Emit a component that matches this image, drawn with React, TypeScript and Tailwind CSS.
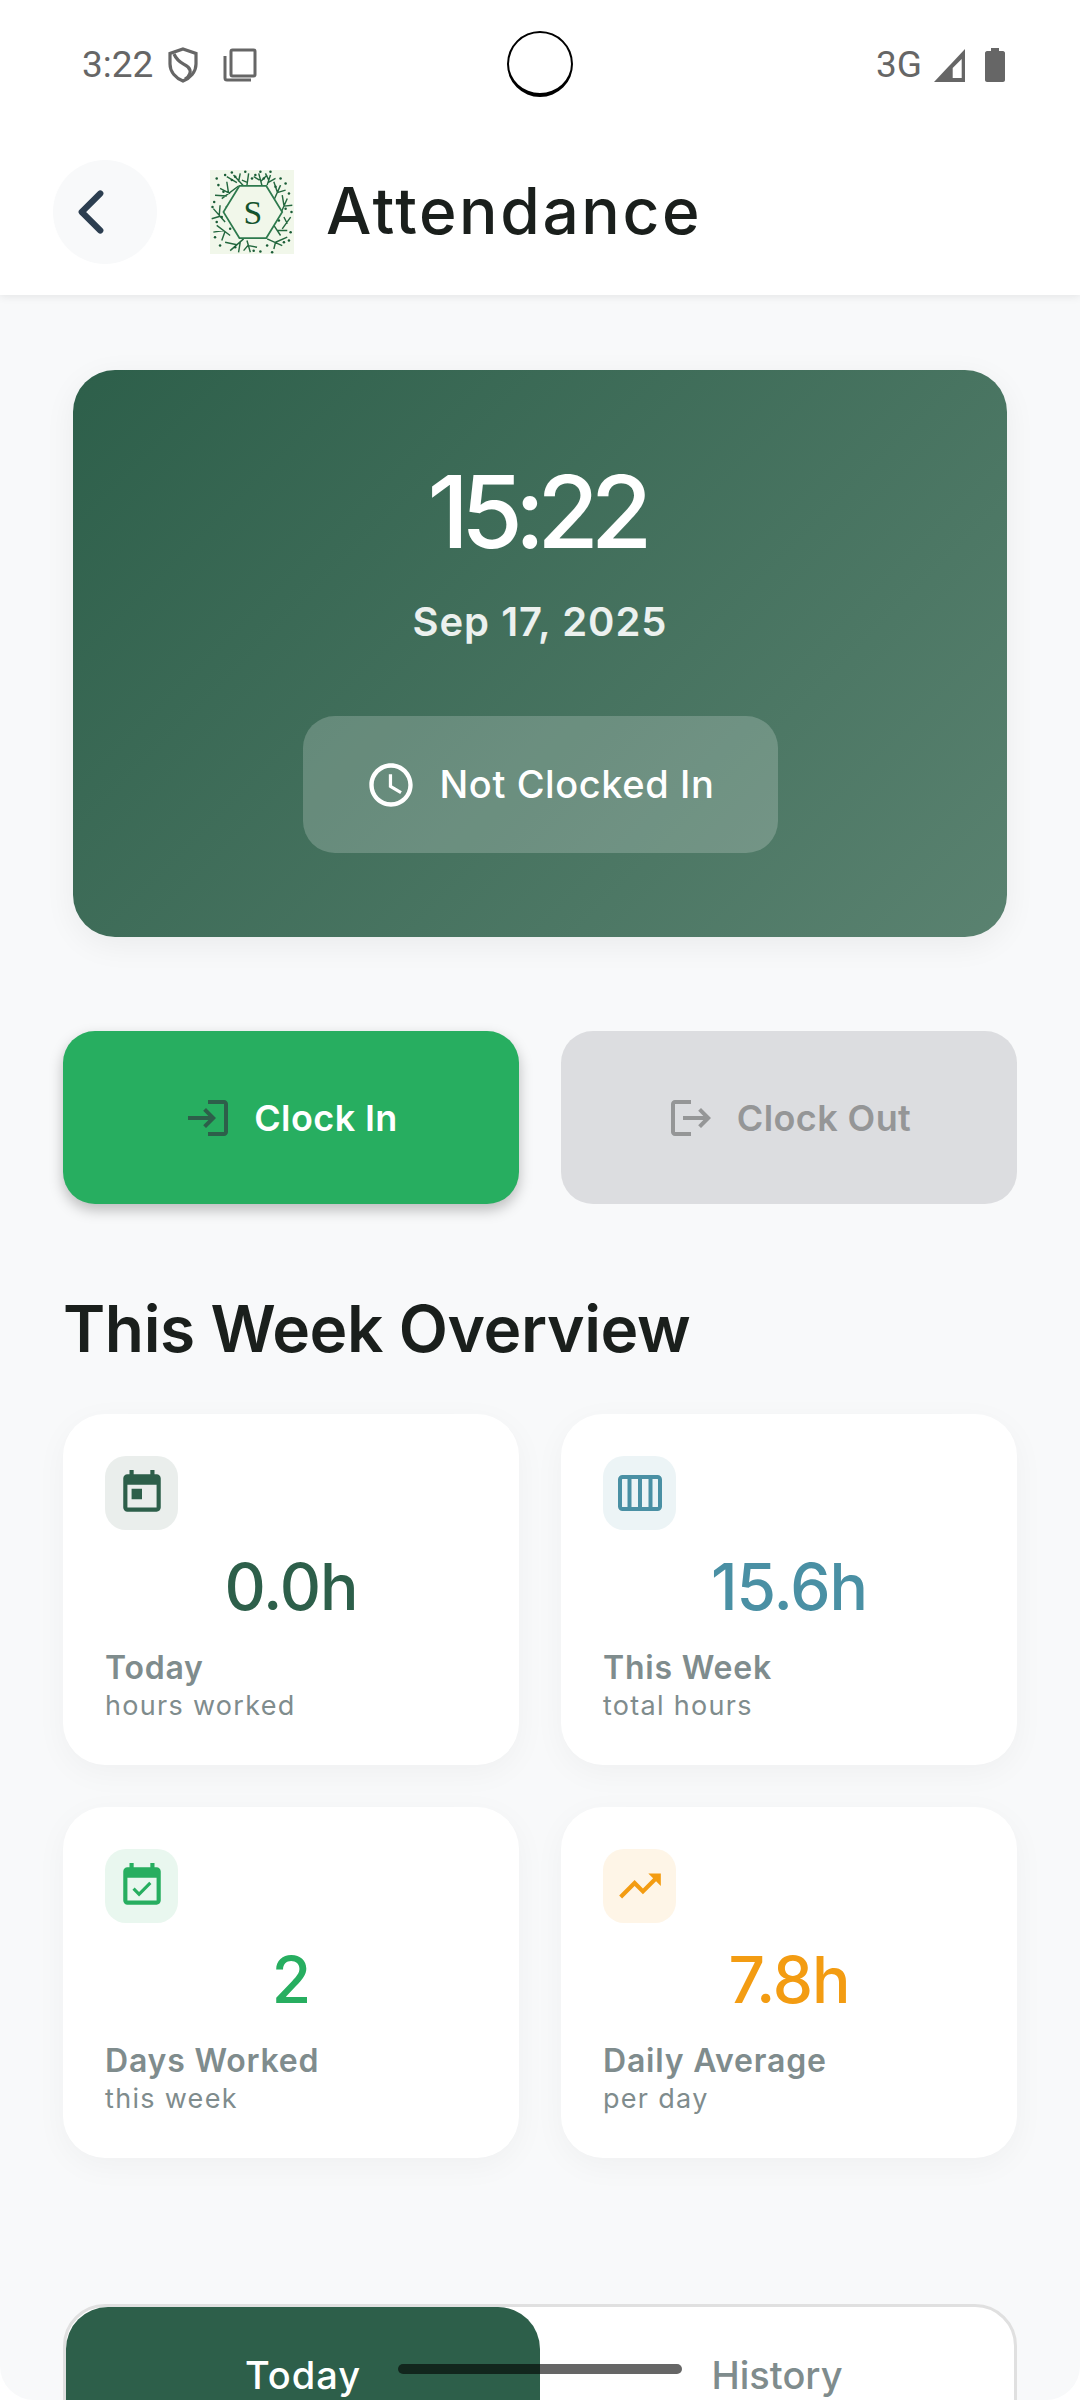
import { IoChevronBack } from "react-icons/io5";
import {
  MdEventAvailable,
  MdLogin,
  MdLogout,
  MdOutlineAccessTime,
  MdToday,
  MdTrendingUp,
} from "react-icons/md";
import type { ReactNode } from "react";

const sprigs = [
  "M14 34 L34 19 M12 22 L24 28 M20 14 L22 27 M6 30 L20 31",
  "M28 6 L40 19 M20 8 L32 15 M36 4 L34 14",
  "M46 4 L44 18 M38 12 L45 15",
  "M58 4 L62 19 M52 8 L59 12 M68 6 L61 13",
  "M72 6 L68 18 M78 10 L69 15 M66 4 L70 12",
  "M84 18 L76 36 M90 24 L80 27 M76 14 L80 26",
  "M92 34 L84 52 M98 42 L88 43 M86 30 L88 42",
  "M96 56 L86 70 M92 64 L88 56",
  "M4 46 L18 62 M2 58 L12 55 M12 42 L11 54",
  "M8 66 L24 78 M4 74 L16 72 M14 84 L18 73",
  "M24 96 L40 82 M18 86 L32 89 M34 98 L36 86",
  "M48 98 L44 84 M56 92 L46 90 M40 96 L45 90",
  "M86 90 L68 82 M92 80 L78 86 M76 94 L78 86",
  "M84 78 L76 66 M92 72 L80 72",
];

const dots = [
  [8, 10], [18, 6], [26, 3], [42, 2], [50, 10], [60, 2], [72, 2], [84, 10], [90, 16],
  [94, 28], [5, 38], [3, 44], [10, 18], [6, 80], [12, 90], [30, 92], [52, 96], [60, 97],
  [74, 98], [88, 86], [96, 74], [97, 50], [26, 12], [64, 10], [82, 60], [14, 56], [16, 26],
  [30, 8], [54, 6], [78, 20], [90, 46], [24, 70], [68, 90], [94, 84], [20, 44], [8, 62],
];

const Logo = () => (
  <svg viewBox="0 0 100 100" className="h-[84px] w-[84px]">
    <rect width="100" height="100" fill="#f1f7ea" />
    <path d={sprigs.join(" ")} stroke="#24683f" strokeWidth="1.7" fill="none" />
    {dots.map(([cx, cy]) => (
      <circle key={`${cx}-${cy}`} cx={cx} cy={cy} r="1.5" fill="#1a5c36" />
    ))}
    <path d="M35 19 H67 L86 50 L67 81 H35 L16 50 Z" stroke="#2d7a4d" strokeWidth="2" fill="#f1f7ea" />
    <text x="51" y="64" textAnchor="middle" fontSize="40" fill="#14532d" fontFamily="'Liberation Serif', serif">
      S
    </text>
  </svg>
);

const ShieldIcon = () => (
  <svg viewBox="0 0 30 36" className="h-[36px] w-[30px]" fill="none" stroke="#666666" strokeWidth="3.2">
    <path d="M15 2 L28 6.5 V17 C28 25 22 31 15 34 C8 31 2 25 2 17 V6.5 Z" />
    <path d="M6 7 C10 16 15 16 20 20 C24 24 22 29 17 32" />
  </svg>
);

const CopyIcon = () => (
  <svg viewBox="0 0 34 34" className="h-[34px] w-[34px]" fill="none" stroke="#666666" strokeWidth="3">
    <rect x="8" y="2" width="24" height="26" rx="1.5" />
    <path d="M2 8 V30 C2 31.5 3 32 4 32 H28" />
  </svg>
);

const SignalIcon = () => (
  <svg viewBox="0 0 31 33" className="h-[33px] w-[31px]">
    <path d="M31 0 V33 H0 Z" fill="#666666" />
    <path d="M18.7 19 L27.7 10 V29 H18.7 Z" fill="#ffffff" />
  </svg>
);

const BatteryIcon = () => (
  <svg viewBox="0 0 20 34" className="h-[34px] w-[20px]">
    <path d="M6 0 H14 V3 H18 C19 3 20 4 20 5 V32 C20 33 19 34 18 34 H2 C1 34 0 33 0 32 V5 C0 4 1 3 2 3 H6 Z" fill="#666666" />
  </svg>
);

const WeekIcon = () => (
  <svg viewBox="0 0 44 36" className="h-[36px] w-[44px]" fill="none" stroke="#4a90a4" strokeWidth="4">
    <rect x="2" y="2" width="40" height="32" rx="2.5" />
    <path d="M11.5 2 V34 M22 2 V34 M32.5 2 V34" />
  </svg>
);

type StatProps = {
  icon: ReactNode;
  iconBg: string;
  value: string;
  valueColor: string;
  label: string;
  sub: string;
};

const StatCard = ({ icon, iconBg, value, valueColor, label, sub }: StatProps) => (
  <div className="h-[351px] rounded-[42px] bg-white p-[42px] shadow-[0_8px_32px_rgba(0,0,0,0.04)]">
    <div className={`flex h-[74px] w-[73px] items-center justify-center rounded-[21px] ${iconBg}`}>{icon}</div>
    <div className={`mt-[13px] text-center text-[64px] leading-[88px] font-medium tracking-[-1px] ${valueColor}`}>
      {value}
    </div>
    <div className="mt-[16px] text-[32px] leading-[42px] font-semibold tracking-[0.8px] text-[#7f8c8d]">{label}</div>
    <div className="-mt-[1px] text-[27px] leading-[36px] tracking-[1.3px] text-[#7f8c8d]">{sub}</div>
  </div>
);

export default function App() {
  return (
    <div className="relative h-[2400px] w-[1080px] overflow-hidden rounded-b-[34px] bg-[#f8f9fa] font-['Inter',sans-serif]">
      {/* Status bar + header */}
      <div className="bg-white shadow-[0_2px_8px_rgba(0,0,0,0.08)]">
        <div className="flex h-[130px] items-center justify-between pr-[75px] pl-[82px] font-['Roboto',sans-serif] text-[37px] text-[#666666]">
          <div className="flex items-center">
            <span>3:22</span>
            <span className="ml-[15px]"><ShieldIcon /></span>
            <span className="ml-[25px]"><CopyIcon /></span>
          </div>
          <div className="flex items-center">
            <span>3G</span>
            <span className="ml-[12px]"><SignalIcon /></span>
            <span className="ml-[20px]"><BatteryIcon /></span>
          </div>
        </div>
        <div className="flex h-[165px] items-start pl-[53px]">
          <button className="mt-[30px] flex h-[104px] w-[104px] items-center justify-center rounded-full bg-[#f8f9fa] pr-[29px] text-[#2c3e50]">
            <IoChevronBack size={66} />
          </button>
          <div className="mt-[40px] ml-[53px]"><Logo /></div>
          <h1 className="mt-[42px] ml-[32px] text-[64px] leading-[78px] font-medium tracking-[2.6px] text-[#1a1f1c]">Attendance</h1>
        </div>
      </div>

      {/* Clock card */}
      <div className="mx-[73px] mt-[75px] flex h-[567px] flex-col items-center rounded-[42px] bg-[linear-gradient(135deg,#2d5f4a,#5a8270)] pt-[87px] shadow-[0_8px_32px_rgba(0,0,0,0.06)]">
        <div className="mr-[8px] text-[100px] leading-[110px] font-medium tracking-[-8px] text-white">15:22</div>
        <div className="mt-[30px] text-[40px] leading-[50px] font-semibold tracking-[1px] text-white/90">Sep 17, 2025</div>
        <div className="mt-[69px] flex h-[137px] w-[475px] items-center justify-center gap-[22px] rounded-[32px] bg-white/20">
          <MdOutlineAccessTime size={52} className="text-white" />
          <span className="text-[38px] font-medium tracking-[0.6px] text-white">Not Clocked In</span>
        </div>
      </div>

      {/* Clock in / out */}
      <div className="mx-[63px] mt-[94px] grid grid-cols-2 gap-[42px]">
        <button className="flex h-[173px] items-center justify-center gap-[22px] rounded-[32px] bg-[#27ae60] text-white shadow-[0_6px_14px_rgba(0,0,0,0.25)]">
          <MdLogin size={48} className="text-[#2d5f4a]" />
          <span className="text-[36px] font-semibold tracking-[0.4px]">Clock In</span>
        </button>
        <button className="flex h-[173px] items-center justify-center gap-[22px] rounded-[32px] bg-[#dcdde0] text-[#959697]">
          <MdLogout size={48} />
          <span className="text-[36px] font-semibold tracking-[0.4px]">Clock Out</span>
        </button>
      </div>

      {/* Week overview */}
      <div className="mx-[63px] mt-[83px]">
        <h2 className="text-[64px] leading-[84px] font-semibold tracking-[-0.4px] text-[#1a1f1c]">This Week Overview</h2>
        <div className="mt-[43px] grid grid-cols-2 gap-[42px]">
          <StatCard
            icon={<MdToday size={50} className="text-[#2d5f4a]" />}
            iconBg="bg-[#eaeeec]"
            value="0.0h"
            valueColor="text-[#2d5f4a]"
            label="Today"
            sub="hours worked"
          />
          <StatCard
            icon={<WeekIcon />}
            iconBg="bg-[#ecf4f6]"
            value="15.6h"
            valueColor="text-[#4a90a4]"
            label="This Week"
            sub="total hours"
          />
          <StatCard
            icon={<MdEventAvailable size={50} className="text-[#27ae60]" />}
            iconBg="bg-[#e9f7ef]"
            value="2"
            valueColor="text-[#27ae60]"
            label="Days Worked"
            sub="this week"
          />
          <StatCard
            icon={<MdTrendingUp size={50} className="text-[#f39c12]" />}
            iconBg="bg-[#fef5e7]"
            value="7.8h"
            valueColor="text-[#f39c12]"
            label="Daily Average"
            sub="per day"
          />
        </div>
      </div>

      {/* Tabs, cut by the screen edge */}
      <div className="mx-[63px] mt-[146px] flex h-[140px] rounded-[42px] border-[3px] border-[#e0e0e0] bg-white">
        <div className="flex w-[474px] items-center justify-center rounded-[42px] bg-[#2d5f4a] pt-[2px] text-[38px] font-medium tracking-[1px] text-white">
          Today
        </div>
        <div className="flex flex-1 items-center justify-center pt-[2px] text-[38px] font-medium text-[#7f8c8d]">
          History
        </div>
      </div>

      {/* Overlays: camera hole and gesture bar */}
      <div className="absolute top-[31px] left-[507px] h-[66px] w-[66px] rounded-full border-[2px] border-b-[4px] border-black bg-white" />
      <div className="absolute top-[2364px] left-[398px] h-[10px] w-[284px] rounded-full bg-black/60" />
    </div>
  );
}
